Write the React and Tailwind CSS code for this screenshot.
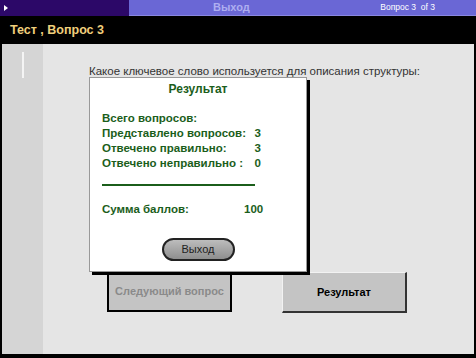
// Quiz result screen — old-style test shell with a modal "Результат" box
const rows = [
  { label: "Всего вопросов:", value: "" },
  { label: "Представлено вопросов:", value: "3" },
  { label: "Отвечено правильно:", value: "3" },
  { label: "Отвечено неправильно :", value: "0" },
];

export default function App() {
  return (
    <div className="w-[476px] h-[358px] bg-black flex flex-col font-['Liberation_Sans',Arial,sans-serif] overflow-hidden">
      {/* Top navigation strip */}
      <div className="h-[16px] flex">
        <div className="w-[129px] bg-[#2c0868] flex items-center pl-[4px]">
          <div className="w-0 h-0 border-y-[3px] border-y-transparent border-l-[4px] border-l-white" />
        </div>
        <div className="flex-1 bg-[#6a67d5] relative flex items-center pl-[84px] border-b border-[#8a88e0]">
          <span className="text-[11px] font-bold text-[#aeaef0] leading-none">Выход</span>
          <span className="absolute right-[41px] top-[3px] text-[8.5px] text-white leading-none">
            Вопрос 3&nbsp; of 3
          </span>
        </div>
      </div>

      {/* Title */}
      <div className="h-[28px] flex items-center pl-[10px]">
        <span className="text-[12.5px] font-bold text-[#f0cf7c] leading-none">Тест , Вопрос 3</span>
      </div>

      {/* Body */}
      <div className="flex-1 flex mx-[2px] mb-[4px]">
        <div className="w-[41px] bg-[#d5d5d5] pt-[8px] pl-[20px]">
          <div className="w-[2px] h-[26px] bg-[#f4f4f4]" />
        </div>

        <div className="flex-1 bg-[#e5e5e5] relative pl-[46px] pt-[21px]">
          <p className="text-[11.5px] text-[#333] leading-[13px] whitespace-nowrap">
            Какое ключевое слово используется для описания структуры:
          </p>

          <div className="flex gap-[50px] mt-[194px] pl-[18px]">
            <button className="w-[125px] h-[40px] bg-[#c4c4c4] border-l-2 border-b-2 border-r-2 border-t border-black border-t-[#eee] text-[11px] font-bold text-[#8a8a8a]">
              Следующий вопрос
            </button>
            <button className="w-[125px] h-[41px] bg-[#c4c4c4] border-l border-t border-[#f2f2f2] border-r-2 border-b-2 border-r-[#333] border-b-[#333] text-[11px] font-bold text-black">
              Результат
            </button>
          </div>

          {/* Result dialog */}
          <div className="absolute left-[46px] top-[33px] w-[218px] h-[195px] bg-white border border-[#999] shadow-[3px_3px_0_#000] text-[#1b5e1b] text-[12px] font-bold px-[12px]">
            <div className="text-center pt-[4px] leading-[15px]">Результат</div>
            <div className="mt-[14px] leading-[15px] text-[11.5px]">
              {rows.map((r) => (
                <div key={r.label} className="flex">
                  <span className="w-[145px] shrink-0 whitespace-nowrap">{r.label}</span>
                  <span className="w-[14px] shrink-0 text-right">{r.value}</span>
                </div>
              ))}
            </div>
            <div className="mt-[13px] w-[153px] h-[2px] bg-[#1b5e1b]" />
            <div className="flex mt-[16px] leading-[15px] text-[11.5px]">
              <span className="w-[142px]">Сумма баллов:</span>
              <span>100</span>
            </div>
            <div className="flex justify-center mt-[21px]">
              <div className="w-[73px] h-[23px] rounded-full border-2 border-[#222] bg-[linear-gradient(#bdbdbd,#8e8e8e)] flex items-center justify-center text-[11px] font-normal text-[#222]">
                Выход
              </div>
            </div>
          </div>
        </div>
      </div>
    </div>
  );
}
